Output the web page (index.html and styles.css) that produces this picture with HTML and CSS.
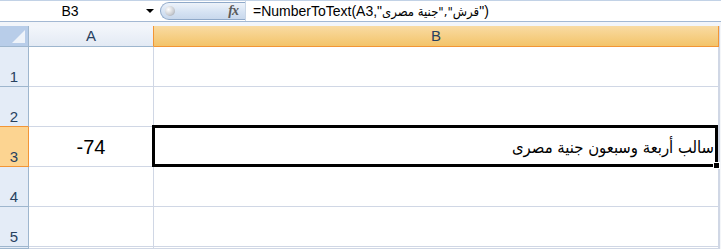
FILE: index.html
```html
<!DOCTYPE html>
<html lang="en">
<head>
  <meta charset="UTF-8" />
  <title>NumberToText</title>
  <link rel="stylesheet" href="styles.css">
</head>
<body>
  <div class="formula-bar">
    <div class="name-box">
      <span class="cell-ref">B3</span>
      <span class="arrow"></span>
    </div>
    <div class="fx-box">
      <span class="knob"></span>
      <span class="fx">fx</span>
    </div>
    <div class="formula">=NumberToText(A3,"<span class="ar">قرش","جنية مصرى</span>")</div>
  </div>
  <div class="strip"></div>

  <div class="sheet">
    <div class="corner"><span class="tri"></span></div>
    <div class="col-head">A</div>
    <div class="col-head active">B</div>
    <div class="edge"></div>

    <div class="row-head">1</div>
    <div class="cell"></div>
    <div class="cell"></div>
    <div class="edge"></div>

    <div class="row-head before-active">2</div>
    <div class="cell"></div>
    <div class="cell"></div>
    <div class="edge"></div>

    <div class="row-head active">3</div>
    <div class="cell num">-74</div>
    <div class="cell text selected"><span class="ar-cell" dir="rtl">سالب أربعة وسبعون جنية مصرى</span></div>
    <div class="edge"></div>

    <div class="row-head">4</div>
    <div class="cell"></div>
    <div class="cell"></div>
    <div class="edge"></div>

    <div class="row-head">5</div>
    <div class="cell"></div>
    <div class="cell"></div>
    <div class="edge"></div>

    <div class="row-head"></div>
    <div class="cell"></div>
    <div class="cell"></div>
    <div class="edge"></div>
  </div>
</body>
</html>
```

FILE: styles.css
```css
html, body {
  margin: 0;
  padding: 0;
  overflow: hidden;
  background: #fff;
}
body {
  width: 721px;
  height: 249px;
  font-family: 'Liberation Sans', 'DejaVu Sans', sans-serif;
  color: #000;
}

/* formula bar */
.formula-bar {
  display: flex;
  height: 22px;
  box-sizing: border-box;
  border-top: 1px solid #c2d2e6;
  border-bottom: 1px solid #a3b8d3;
  background: #fff;
}
.name-box {
  width: 160px;
  display: flex;
  align-items: center;
}
.cell-ref {
  width: 140px;
  text-align: center;
  font-size: 14px;
}
.arrow {
  width: 0;
  height: 0;
  margin-left: 6px;
  border-left: 4px solid transparent;
  border-right: 4px solid transparent;
  border-top: 4px solid #000;
}
.fx-box {
  width: 85px;
  margin: 1px 0;
  box-sizing: border-box;
  border: 1px solid #8fa9c9;
  border-right: none;
  border-radius: 10px 0 0 10px;
  background: linear-gradient(#eef3fa, #d6e3f3 55%, #c8d8ec);
  display: flex;
  align-items: center;
  justify-content: space-between;
  padding: 0 7px 0 4px;
}
.knob {
  width: 10px;
  height: 10px;
  border-radius: 50%;
  background: radial-gradient(circle at 35% 35%, #fff, #c9ccd1 60%, #8e939b);
}
.fx {
  font-family: 'Liberation Serif', serif;
  font-style: italic;
  font-weight: bold;
  font-size: 14px;
  color: #5a5a5a;
  letter-spacing: -1px;
}
.formula {
  flex: 1;
  padding-left: 7px;
  font-size: 14px;
  line-height: 20px;
  white-space: nowrap;
  overflow: hidden;
  border-left: 1px solid #c9d6e6;
}
.ar {
  font-family: 'DejaVu Sans Condensed', 'DejaVu Sans', sans-serif;
  font-size: 13px;
}
.strip {
  height: 4px;
  background: #f2f5fa;
}

/* sheet grid */
.sheet {
  display: grid;
  grid-template-columns: 29px 125px 565px 2px;
  grid-template-rows: 21px repeat(5, 40px) 2px;
}
.sheet > div {
  box-sizing: border-box;
}
.corner {
  position: relative;
  background: #b8cde9;
  border-right: 1px solid #9eb6ce;
  border-bottom: 1px solid #9eb6ce;
}
.tri {
  position: absolute;
  right: 3px;
  bottom: 3px;
  width: 0;
  height: 0;
  border-left: 13px solid transparent;
  border-bottom: 13px solid #eef3fa;
}
.col-head {
  background: linear-gradient(#f3f6fb, #e3eaf4);
  border-right: 1px solid #f29536;
  border-bottom: 1px solid #9eb6ce;
  text-align: center;
  font-size: 15px;
  line-height: 20px;
  color: #27415f;
}
.col-head.active {
  background: linear-gradient(#f9dba3, #f3c46a);
  border-bottom: 1px solid #f29536;
}
.edge {
  background: #f4f6f9;
  border-left: 1px solid #d0d7e5;
}
.row-head {
  background: #e4ecf7;
  border-right: 1px solid #9eb6ce;
  border-bottom: 1px solid #9eb6ce;
  display: flex;
  align-items: flex-end;
  justify-content: center;
  padding-bottom: 1px;
  font-size: 15px;
  color: #27415f;
}
.row-head.before-active {
  border-bottom-color: #f29536;
}
.row-head.active {
  background: #fcd491;
  border-right-color: #f29536;
  border-bottom-color: #f29536;
}
.cell {
  border-right: 1px solid #d0d7e5;
  border-bottom: 1px solid #d0d7e5;
  display: flex;
  align-items: center;
  font-size: 20px;
}
.cell.num {
  justify-content: center;
  padding-top: 2px;
}
.cell.text {
  justify-content: flex-end;
  padding-right: 4px;
  padding-top: 2px;
}
.ar-cell {
  font-family: 'DejaVu Sans Condensed', 'DejaVu Sans', sans-serif;
  font-size: 16.5px;
}
.selected {
  position: relative;
}
.selected::after {
  content: '';
  position: absolute;
  left: -2px;
  top: -2px;
  right: 0;
  bottom: -1px;
  border: 3px solid #000;
}
.selected::before {
  content: '';
  position: absolute;
  right: -2px;
  bottom: -3px;
  width: 5px;
  height: 5px;
  background: #000;
  border: 1px solid #fff;
  z-index: 2;
}
```
